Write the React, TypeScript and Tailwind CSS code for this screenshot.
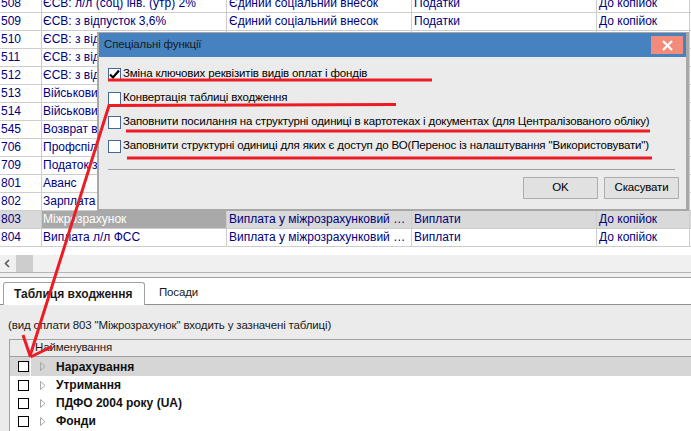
import React from "react";

type Row = {
  code: string;
  name: string;
  group: string;
  kind: string;
  round: string;
  sel?: boolean;
};

const rows: Row[] = [
  { code: "508", name: "ЄСВ: л/л (соц) інв. (утр) 2%", group: "Єдиний соціальний внесок", kind: "Податки", round: "До копійок" },
  { code: "509", name: "ЄСВ: з відпусток 3,6%", group: "Єдиний соціальний внесок", kind: "Податки", round: "До копійок" },
  { code: "510", name: "ЄСВ: з відпусток 8,41%", group: "Єдиний соціальний внесок", kind: "Податки", round: "До копійок" },
  { code: "511", name: "ЄСВ: з відпусток 22%", group: "Єдиний соціальний внесок", kind: "Податки", round: "До копійок" },
  { code: "512", name: "ЄСВ: з відпусток інв. 8,41%", group: "Єдиний соціальний внесок", kind: "Податки", round: "До копійок" },
  { code: "513", name: "Військовий збір", group: "Військовий збір", kind: "Податки", round: "До копійок" },
  { code: "514", name: "Військовий збір з лікарняних", group: "Військовий збір", kind: "Податки", round: "До копійок" },
  { code: "545", name: "Возврат в зарплату", group: "Утримання", kind: "Утримання", round: "До копійок" },
  { code: "706", name: "Профспілкові внески", group: "Утримання", kind: "Утримання", round: "До копійок" },
  { code: "709", name: "Податок з доходів", group: "ПДФО", kind: "Податки", round: "До копійок" },
  { code: "801", name: "Аванс", group: "Виплата авансу", kind: "Виплати", round: "До копійок" },
  { code: "802", name: "Зарплата", group: "Виплата зарплати", kind: "Виплати", round: "До копійок" },
  { code: "803", name: "Міжрозрахунок", group: "Виплата у міжрозрахунковий період", kind: "Виплати", round: "До копійок", sel: true },
  { code: "804", name: "Виплата л/л ФСС", group: "Виплата у міжрозрахунковий період", kind: "Виплати", round: "До копійок" },
];

const options = [
  { label: "Зміна ключових реквізитів видів оплат і фондів", checked: true },
  { label: "Конвертація таблиці входження", checked: false },
  { label: "Заповнити посилання на структурні одиниці в картотеках і документах (для Централізованого обліку)", checked: false },
  { label: "Заповнити структурні одиниці для яких є доступ до ВО(Перенос із налаштування \"Використовувати\")", checked: false },
];

const tree = ["Нарахування", "Утримання", "ПДФО 2004 року (UA)", "Фонди"];

const cell = "h-full border-r border-[#cdcdcd] truncate leading-[17px] shrink-0";
const ui = "text-[11.5px] tracking-[-0.15px]";

function DialogCheck({ checked }: { checked: boolean }) {
  return (
    <div className="w-[13px] h-[13px] border border-[#44679b] bg-white shrink-0 flex items-center justify-center">
      {checked && (
        <svg width="11" height="11" viewBox="0 0 11 11">
          <polyline points="1,5.5 4,8.5 10,1.5" fill="none" stroke="#000" strokeWidth="2.2" />
        </svg>
      )}
    </div>
  );
}

export default function App() {
  return (
    <div className="relative w-[691px] h-[431px] overflow-hidden bg-white font-['Liberation_Sans',Arial,sans-serif] text-[12px] text-black flex flex-col">
      {/* grid of pay types */}
      <div className="h-[255px] shrink-0 overflow-hidden bg-white">
        <div className="-mt-[5px]">
          {rows.map((r) => (
            <div key={r.code} className="flex h-[18px] border-b border-[#cdcdcd] text-[#000080]">
              <div className={`${cell} w-[42px] pl-[1px] ${r.sel ? "bg-[#d9d9d9]" : ""}`}>{r.code}</div>
              <div className={`${cell} w-[185px] pl-[1px] ${r.sel ? "bg-[#a9a9a9] text-white" : ""}`}>{r.name}</div>
              <div className={`${cell} w-[185px] pl-[2px] ${r.sel ? "bg-[#d9d9d9]" : ""}`}>{r.group}</div>
              <div className={`${cell} w-[185px] pl-[2px] ${r.sel ? "bg-[#d9d9d9]" : ""}`}>{r.kind}</div>
              <div className={`${cell} w-[93px] pl-[2px] ${r.sel ? "bg-[#d9d9d9]" : ""}`}>{r.round}</div>
              <div className={`flex-1 h-full ${r.sel ? "bg-[#d9d9d9]" : ""}`} />
            </div>
          ))}
        </div>
      </div>

      {/* horizontal scrollbar */}
      <div className="h-[17px] shrink-0 bg-[#f0f0f0] flex items-center">
        <svg width="16" height="17" viewBox="0 0 16 17" className="shrink-0">
          <polyline points="9,5 5.5,8.5 9,12" fill="none" stroke="#5a5a5a" strokeWidth="1.6" />
        </svg>
        <div className="w-[17px] h-full bg-[#cdcdcd]" />
      </div>
      <div className="h-px shrink-0 bg-[#b4b4b4]" />
      <div className="h-[4px] shrink-0 bg-[#f0f0f0]" />
      <div className="h-px shrink-0 bg-[#a0a0a0]" />

      {/* tabs */}
      <div className="h-[27px] shrink-0 flex items-end pl-[3px] border-b border-[#8f8f8f] bg-white">
        <div className="h-[23px] w-[142px] -mb-px border border-b-0 border-[#a0a0a0] rounded-t-[3px] bg-white pl-[10px] flex items-center font-bold text-[#1a1a1a]">
          Таблиця входження
        </div>
        <div className={`h-[23px] pl-[14px] flex items-center text-[#1a1a1a] ${ui}`}>Посади</div>
      </div>

      {/* panel */}
      <div className="flex-1 bg-[#ebebeb] flex flex-col">
        <div className={`pt-[13px] pl-[8px] leading-[14px] text-[#1a1a1a] ${ui}`}>
          (вид оплати 803 "Міжрозрахунок" входить у зазначені таблиці)
        </div>
        <div className="mt-[7px] ml-[9px] border-l border-t border-[#a0a0a0] flex-1 flex flex-col">
          <div className="h-[17px] shrink-0 flex items-center border-b border-[#a0a0a0] text-[#1a1a1a]">
            <div className="w-[21px] h-full border-r border-white shrink-0" />
            <span className={`pl-[4px] ${ui}`}>Найменування</span>
          </div>
          <div className="bg-white flex-1">
            {tree.map((t, i) => (
              <div key={t} className={`flex items-center ${i === 0 ? "h-[19px] bg-[#d6d6d6]" : "h-[18px]"}`}>
                <div className="w-[21px] h-full shrink-0 flex items-center pl-[8px] border-r border-white">
                  <div className="w-[11px] h-[11px] border border-black bg-white" />
                </div>
                <svg width="6" height="9" viewBox="0 0 6 9" className="ml-[9px] shrink-0">
                  <polygon points="0.5,0.5 5,4.5 0.5,8.5" fill="none" stroke="#a8a8a8" strokeWidth="1" />
                </svg>
                <span className="ml-[10px] font-bold text-[#111]">{t}</span>
              </div>
            ))}
          </div>
        </div>
      </div>

      {/* dialog */}
      <div className="absolute left-[97px] top-[32px] w-[592px] h-[179px] border-l-2 border-t border-b-2 border-r-[3px] border-[#a8a8a8] bg-[#ebebeb] flex flex-col">
        <div className="h-[24px] shrink-0 bg-[#4682bf] flex justify-between">
          <span className={`pl-[5px] self-center text-[#1a1a1a] ${ui}`}>Спеціальні функції</span>
          <div className="w-[32px] h-[18px] mt-[3px] mr-[3px] bg-[#f38b7b] flex items-center justify-center">
            <svg width="11" height="11" viewBox="0 0 11 11">
              <line x1="1" y1="1" x2="10" y2="10" stroke="#fff" strokeWidth="2.2" />
              <line x1="10" y1="1" x2="1" y2="10" stroke="#fff" strokeWidth="2.2" />
            </svg>
          </div>
        </div>
        <div className="pt-[5px] pl-[9px] flex flex-col">
          {options.map((o) => (
            <div key={o.label} className={`h-[24px] flex items-center gap-[2px] ${ui}`}>
              <DialogCheck checked={o.checked} />
              <span className="whitespace-nowrap">{o.label}</span>
            </div>
          ))}
          <div className="mt-[11px] w-[567px] h-px bg-[#a0a0a0]" />
          <div className={`mt-[7px] pr-[7px] flex justify-end gap-[6px] ${ui}`}>
            <button className="w-[75px] h-[22px] bg-[#e1e1e1] border border-[#adadad]">OK</button>
            <button className="w-[75px] h-[22px] bg-[#e1e1e1] border border-[#adadad]">Скасувати</button>
          </div>
        </div>
      </div>

      {/* red annotations */}
      <svg className="absolute inset-0 pointer-events-none" width="691" height="431" viewBox="0 0 691 431">
        <g stroke="#ed1c24" strokeWidth="3" fill="none" strokeLinecap="butt">
          <line x1="108" y1="80" x2="432" y2="80" />
          <polyline points="396,104.5 109,105.5 30,356" />
          <line x1="23" y1="335" x2="30.5" y2="357" />
          <line x1="52" y1="346.5" x2="30.5" y2="357" />
          <line x1="126" y1="131" x2="650" y2="131" />
          <line x1="127" y1="158" x2="652" y2="158" />
        </g>
      </svg>
    </div>
  );
}
